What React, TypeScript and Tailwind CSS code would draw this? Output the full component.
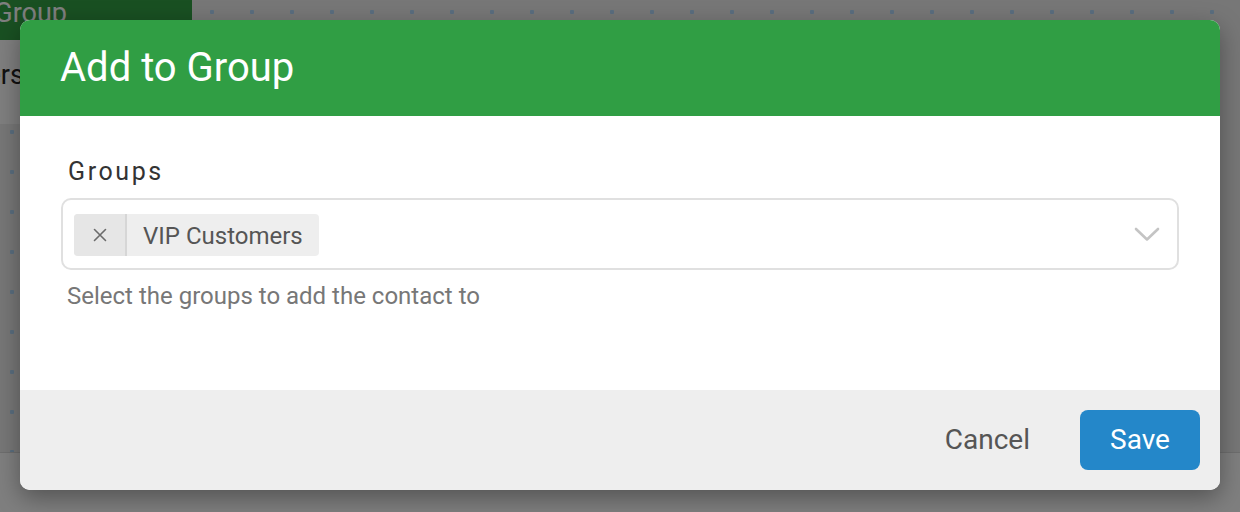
import React from 'react';

const Chevron = () => (
  <svg width="26" height="15" viewBox="0 0 26 15" fill="none">
    <path d="M2 2 L13 12.5 L24 2" stroke="#c4c4c4" strokeWidth="2.6" strokeLinecap="round" strokeLinejoin="round" />
  </svg>
);

const Cross = () => (
  <svg width="14" height="14" viewBox="0 0 14 14" fill="none">
    <path d="M1.5 1.5 L12.5 12.5 M12.5 1.5 L1.5 12.5" stroke="#6b6b6b" strokeWidth="1.6" strokeLinecap="round" />
  </svg>
);

const Backdrop = () => (
  <div className="flex h-full flex-col">
    <div className="flex-1 bg-[#eeeeee] bg-[radial-gradient(circle,#b4dcff_2px,transparent_2.5px)] bg-size-[40px_40px] bg-[length:40px_40px] bg-position-[-8px_-8px] bg-[position:-8px_-8px]">
      <div className="w-[192px] bg-white">
        <div className="flex h-[40px] items-start justify-end overflow-hidden bg-[#33a045] pr-[20px] text-[27px] leading-[26px] text-white">
          <span className="-ml-[200px] whitespace-nowrap">
            <span className="mr-[105px]">Add to Group</span>
          </span>
        </div>
        <div className="flex h-[84px] items-center overflow-hidden pb-[14px] text-[27px] text-[#222]">
          <span className="-ml-[45px] whitespace-nowrap">Users</span>
        </div>
      </div>
    </div>
    <div className="h-[60px] border-t border-[#dddddd] bg-white" />
  </div>
);

export default function App() {
  return (
    <div className="relative h-[512px] w-[1240px] overflow-hidden font-['Roboto',sans-serif]">
      <Backdrop />
      <div className="absolute inset-0 flex items-start justify-center bg-black/50 pt-[20px]">
        <div className="w-[1200px] overflow-hidden rounded-[10px] bg-white shadow-[0_8px_24px_rgba(0,0,0,0.35)]">
          <div className="flex h-[96px] items-center bg-[#309e44] px-[40px]">
            <h2 className="text-[40px] font-normal text-white">Add to Group</h2>
          </div>
          <div className="h-[274px] px-[41px] pt-[40px]">
            <label className="block pl-[7px] text-[25px] leading-[32px] tracking-[2.6px] text-[#333]">Groups</label>
            <div className="mt-[10px] flex h-[72px] items-center justify-between rounded-[10px] border-2 border-[#e0e0e0] pl-[11px] pr-[17px]">
              <div className="mt-[2px] flex h-[42px] items-stretch overflow-hidden rounded-[4px] bg-[#eeeeee]">
                <div className="flex w-[53px] items-center justify-center border-r-2 border-[#d6d6d6] bg-[#e6e6e6]">
                  <Cross />
                </div>
                <div className="flex items-center pl-[16px] pr-[16px] pt-[2px] text-[24px] text-[#555]">VIP Customers</div>
              </div>
              <Chevron />
            </div>
            <p className="mt-[10px] pl-[6px] text-[24px] leading-[32px] text-[#777]">Select the groups to add the contact to</p>
          </div>
          <div className="flex h-[100px] items-center justify-end bg-[#eeeeee] pr-[20px]">
            <button className="mr-[34px] px-[16px] text-[28px] text-[#555]">Cancel</button>
            <button className="h-[60px] w-[120px] rounded-[8px] bg-[#2487c9] text-[28px] text-white">Save</button>
          </div>
        </div>
      </div>
    </div>
  );
}
